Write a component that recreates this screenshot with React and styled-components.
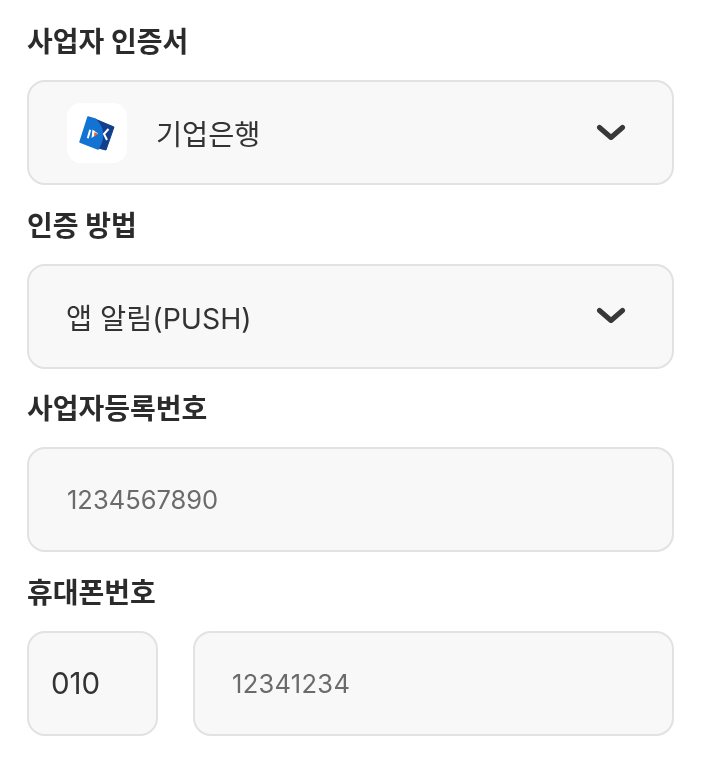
import React from "react";
import styled, { createGlobalStyle } from "styled-components";

const Global = createGlobalStyle`
  html, body { margin: 0; padding: 0; background: #fff; }
  body { font-family: Inter, "Noto Sans CJK KR", sans-serif; }
`;

const Page = styled.div`
  width: 702px;
  height: 763px;
  box-sizing: border-box;
  padding: 23px 28px 0 27px;
  display: flex;
  flex-direction: column;
  gap: 21.5px;
  overflow: hidden;
  filter: blur(0.4px);
`;

const Field = styled.section`
  display: flex;
  flex-direction: column;
  gap: 19px;
`;

const Label = styled.div`
  height: 38px;
  line-height: 38px;
  font-size: 28px;
  font-weight: 700;
  color: #2b2b2b;
`;

const Box = styled.div`
  box-sizing: border-box;
  height: 105px;
  flex: ${(p) => p.$flex || "none"};
  width: ${(p) => p.$width || "auto"};
  display: flex;
  align-items: center;
  padding: 0 ${(p) => p.$right || 46}px 0 ${(p) => p.$left || 37}px;
  background: #f8f8f8;
  border: 2px solid #e2e2e2;
  border-radius: 18px;
`;

const Value = styled.span`
  flex: 1;
  font-size: ${(p) => p.$size || 28.4}px;
  color: ${(p) => (p.$muted ? "#6b6b6b" : "#333333")};
  letter-spacing: ${(p) => p.$spacing || 0}px;
`;

const LogoTile = styled.div`
  width: 60px;
  height: 60px;
  flex: none;
  margin-right: 29px;
  border-radius: 14px;
  background: #ffffff;
  display: flex;
  align-items: center;
  justify-content: center;
`;

const Row = styled.div`
  display: flex;
  gap: 35px;
`;

const Chevron = () => (
  <svg width="30" height="30" viewBox="0 0 30 30" fill="none" aria-hidden="true">
    <path d="M3.5 9.5 15 19.5 26.5 9.5" stroke="#383838" strokeWidth="5" strokeLinecap="round" strokeLinejoin="round" />
  </svg>
);

const IbkLogo = () => (
  <svg width="38" height="38" viewBox="0 0 38 38" aria-hidden="true">
    <path d="M17 5 36 13 28 36 20 34C24 29 26 24 24.5 18 23.5 13 20 9 17 5Z" fill="#123f8c" stroke="#123f8c" strokeLinejoin="round" />
    <path d="M10 3 17 5C21 9 24 14 24.5 19 25 25 23 30 20 35L2 28Z" fill="#1273d2" stroke="#1273d2" strokeWidth="1.5" strokeLinejoin="round" />
    <rect x="10" y="15.5" width="2" height="9" fill="#fff" transform="rotate(16 11 20)" />
    <path d="M14.5 15.5 20 19.5 13.5 24Z" fill="#fff" />
    <path d="M16.5 18 20 20 16 22.5Z" fill="#f0602a" />
    <path d="M30.5 15 26 20 29 26" stroke="#fff" strokeWidth="2" fill="none" />
  </svg>
);

export default function App() {
  return (
    <>
      <Global />
      <Page>
        <Field>
          <Label>사업자 인증서</Label>
          <Box $left={38}>
            <LogoTile>
              <IbkLogo />
            </LogoTile>
            <Value>기업은행</Value>
            <Chevron />
          </Box>
        </Field>
        <Field>
          <Label>인증 방법</Label>
          <Box>
            <Value>앱 알림(PUSH)</Value>
            <Chevron />
          </Box>
        </Field>
        <Field>
          <Label>사업자등록번호</Label>
          <Box $left={38}>
            <Value $muted $size={25.5}>1234567890</Value>
          </Box>
        </Field>
        <Field>
          <Label>휴대폰번호</Label>
          <Row>
            <Box $width="131px" $left={22} $right={10}>
              <Value $size={29.5}>010</Value>
            </Box>
            <Box $flex="1" $left={37}>
              <Value $muted $size={25.5} $spacing={0.3}>12341234</Value>
            </Box>
          </Row>
        </Field>
      </Page>
    </>
  );
}
